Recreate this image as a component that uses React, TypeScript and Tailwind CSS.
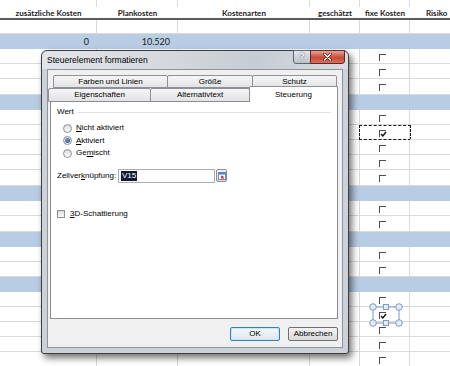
const colW = ["w-[97px]", "w-[81px]", "w-[132px]", "w-[50px]", "w-[50px]", "w-[60px]"];
const rowH: Record<number, string> = { 14: "h-[14px]", 15: "h-[15px]", 16: "h-[16px]" };

type Kind = "blank" | "val" | "blue" | "box" | "dash" | "sel";

const body: [Kind, number][] = [
  ["blank", 14], ["val", 15], ["box", 15], ["box", 15], ["box", 16],
  ["blue", 15], ["box", 15], ["dash", 15], ["box", 15], ["box", 15], ["box", 16],
  ["blue", 15], ["box", 15], ["box", 16],
  ["blue", 15], ["box", 15], ["box", 15],
  ["blue", 15], ["box", 15], ["sel", 15], ["box", 15], ["box", 15], ["box", 15],
];

const headers = ["zusätzliche Kosten", "Plankosten", "Kostenarten", "geschätzt", "fixe Kosten", ""];

function FlatBox({ checked }: { checked?: boolean }) {
  return (
    <span className="relative block w-[7px] h-[7px] border-t border-l border-[#4d4d4d]">
      {checked && (
        <svg className="absolute left-[0px] top-[0px]" width="7" height="6" viewBox="0 0 7 6">
          <path d="M1 3 L2.8 5 L6 1" fill="none" stroke="#111" strokeWidth="1.4" />
        </svg>
      )}
    </span>
  );
}

function Handles() {
  return (
    <svg className="absolute left-[10px] top-[-3px] overflow-visible" width="32" height="22" viewBox="0 0 32 22">
      <rect x="3" y="3" width="26" height="16" fill="none" stroke="#7b9cc4" strokeWidth="1" />
      {[[3, 3], [29, 3], [3, 19], [29, 19]].map(([cx, cy], i) => (
        <circle key={i} cx={cx} cy={cy} r="3.3" fill="#e4edf7" stroke="#7b9cc4" strokeWidth="1" />
      ))}
      {[[16, 3], [16, 19]].map(([x, y], i) => (
        <rect key={i} x={x - 2.5} y={y - 2.5} width="5" height="5" fill="#e4edf7" stroke="#7b9cc4" strokeWidth="1" />
      ))}
    </svg>
  );
}

function SheetRow({ kind, h }: { kind: Kind; h: number }) {
  const blue = kind === "val" || kind === "blue";
  return (
    <div className={`flex ${rowH[h]} ${blue ? "bg-[#b8cce4]" : ""}`}>
      {colW.map((w, i) => (
        <div
          key={i}
          className={`${w} shrink-0 relative ${blue ? "" : "border-r border-b border-[#dadada]"} flex items-center`}
        >
          {kind === "val" && i === 0 && <span className="ml-auto mr-[8px]">0</span>}
          {kind === "val" && i === 1 && <span className="ml-auto mr-[8px]">10.520</span>}
          {i === 4 && (kind === "box" || kind === "dash" || kind === "sel") && (
            <div className="absolute left-[19px] top-[5px]">
              <FlatBox checked={kind !== "box"} />
            </div>
          )}
          {i === 4 && kind === "dash" && (
            <div className="absolute top-0 bottom-[-1px] left-[-1px] right-[-2px] border border-dashed border-[#1a1a1a]" />
          )}
          {i === 4 && kind === "sel" && <Handles />}
        </div>
      ))}
    </div>
  );
}

function Sheet() {
  return (
    <div className="font-['Lato',sans-serif] text-[9px] text-[#222]">
      <div className="flex h-[7px]">
        {colW.map((w, i) => (
          <div key={i} className={`${w} shrink-0 border-r border-[#dadada]`} />
        ))}
      </div>
      <div className="flex h-[13px] border-b-2 border-[#5b5b5b] font-bold text-[8px]">
        {headers.map((t, i) => (
          <div key={i} className={`${colW[i]} shrink-0 flex items-center justify-center`}>
            {i === 5 ? <span className="mr-auto ml-[16px]">Risiko</span> : t}
          </div>
        ))}
      </div>
      {body.map(([k, h], i) => (
        <SheetRow key={i} kind={k} h={h} />
      ))}
    </div>
  );
}

function Tab({ w, label, active }: { w: string; label: string; active?: boolean }) {
  return (
    <div
      className={`${w} -ml-px first:ml-0 flex items-center justify-center border border-[#8e9199] rounded-t-[2px] ${
        active
          ? "bg-white border-b-0 h-[16px] -mt-[2px] relative z-10"
          : "h-full bg-[linear-gradient(#f6f6f6,#e3e3e3)]"
      }`}
    >
      {label}
    </div>
  );
}

function Radio({ checked, children }: { checked?: boolean; children: React.ReactNode }) {
  return (
    <div className="flex items-center h-[12.5px]">
      <span className="w-[9px] h-[9px] rounded-full border border-[#8e8f8f] bg-[linear-gradient(#dcdcdc,#fbfbfb)] flex items-center justify-center">
        {checked && <span className="w-[5px] h-[5px] rounded-full bg-[radial-gradient(circle_at_40%_35%,#6aa0e6,#1b3f87)]" />}
      </span>
      <span className="ml-[4px]">{children}</span>
    </div>
  );
}

function Dialog() {
  return (
    <div className="absolute left-[41px] top-[50px] w-[308px] h-[304px] rounded-t-[6px] rounded-b-[3px] border border-[#3e3e3e] bg-[#cdd2d8] shadow-[3px_4px_7px_rgba(0,0,0,0.55)] flex flex-col font-['Liberation_Sans',Arial,sans-serif] text-[8px] text-black">
      <div className="relative h-[18px] flex items-center pl-[5px] rounded-t-[6px] bg-[linear-gradient(90deg,#e2e5e9,#d3d7dc_45%,#c6ccd3_70%,#d9dde2)]">
        <span className="text-[8.5px]">Steuerelement formatieren</span>
        <div className="absolute top-[-1px] right-[3px] flex h-[14px]">
          <div className="w-[18px] h-full border border-[#5f656d] rounded-bl-[3px] bg-[linear-gradient(#e4e8ed,#b9c1cb)] flex items-center justify-center font-bold text-[9px] text-white [text-shadow:0_0_2px_#333]">
            ?
          </div>
          <div className="w-[35px] h-full -ml-px border border-[#5b2a24] rounded-br-[3px] bg-[linear-gradient(#e8a395,#c94b36_55%,#d9705d)] flex items-center justify-center">
            <svg width="9" height="8" viewBox="0 0 9 8">
              <path d="M1.5 1 L7.5 7 M7.5 1 L1.5 7" stroke="#4a1a14" strokeWidth="2.6" strokeLinecap="round" />
              <path d="M1.5 1 L7.5 7 M7.5 1 L1.5 7" stroke="#fff" strokeWidth="1.4" strokeLinecap="round" />
            </svg>
          </div>
        </div>
      </div>

      <div className="flex-1 mx-[5px] mb-[5px] bg-[#f0f0f0] border border-[#8d939a] flex flex-col pt-[5px]">
        <div className="flex h-[13px] ml-[5px]">
          <Tab w="w-[115px]" label="Farben und Linien" />
          <Tab w="w-[86px]" label="Größe" />
          <Tab w="w-[85px]" label="Schutz" />
        </div>
        <div className="flex h-[14px] items-end">
          <Tab w="w-[103px]" label="Eigenschaften" />
          <Tab w="w-[100px]" label="Alternativtext" />
          <Tab w="w-[89px]" label="Steuerung" active />
        </div>
        <div className="ml-[2px] w-[288px] h-[218px] -mt-px bg-white border border-[#898c95] flex flex-col pl-[6px] pt-[5px]">
          <div className="flex items-center h-[10px]">
            <span>Wert</span>
            <span className="flex-1 h-px bg-[#dde3e8] ml-[4px] mr-[6px]" />
          </div>
          <div className="ml-[6px] mt-[5px] flex flex-col">
            <Radio>
              <span className="underline">N</span>icht aktiviert
            </Radio>
            <Radio checked>
              <span className="underline">A</span>ktiviert
            </Radio>
            <Radio>
              Ge<span className="underline">m</span>ischt
            </Radio>
          </div>
          <div className="flex items-center h-[14px] mt-[9px]">
            <span className="w-[61px]">
              Zellver<span className="underline">k</span>nüpfung:
            </span>
            <div className="w-[97px] h-full border border-[#abadb3] bg-white flex items-center pl-[2px]">
              <span className="bg-[#15173a] text-white px-[1px] leading-[10px]">V15</span>
            </div>
            <div className="w-[11px] h-[13px] ml-[1px] border border-[#8a8e94] rounded-[2px] bg-[linear-gradient(#f4f4f4,#dcdfe3)] flex items-center justify-center">
              <svg width="8" height="8" viewBox="0 0 8 8">
                <rect x="0.5" y="0.5" width="7" height="7" fill="#fff" stroke="#6b8cc0" />
                <rect x="0.5" y="0.5" width="7" height="2" fill="#4f7fd0" />
                <path d="M3 3.5 L6.5 5 L5 5.6 L6.2 7.2 L5.4 7.6 L4.3 6 L3.2 7 Z" fill="#d22" />
              </svg>
            </div>
          </div>
          <div className="flex items-center h-[10px] mt-[26px]">
            <span className="w-[8px] h-[8px] border border-[#8e8f8f] bg-[linear-gradient(#dcdcdc,#fbfbfb)]" />
            <span className="ml-[5px]">
              <span className="underline">3</span>D-Schattierung
            </span>
          </div>
        </div>
        <div className="flex justify-end gap-[8px] pr-[4px] mt-[8px]">
          <div className="w-[50px] h-[14px] rounded-[2px] border border-[#3c7fb1] bg-[linear-gradient(#f4f8fb,#dde6ee)] shadow-[inset_0_0_0_1px_#c8e4f7] flex items-center justify-center">
            OK
          </div>
          <div className="w-[50px] h-[14px] rounded-[2px] border border-[#707070] bg-[linear-gradient(#f2f2f2,#dadada)] flex items-center justify-center">
            Abbrechen
          </div>
        </div>
      </div>
    </div>
  );
}

export default function App() {
  return (
    <div className="relative w-[450px] h-[366px] overflow-hidden bg-white">
      <Sheet />
      <Dialog />
    </div>
  );
}
